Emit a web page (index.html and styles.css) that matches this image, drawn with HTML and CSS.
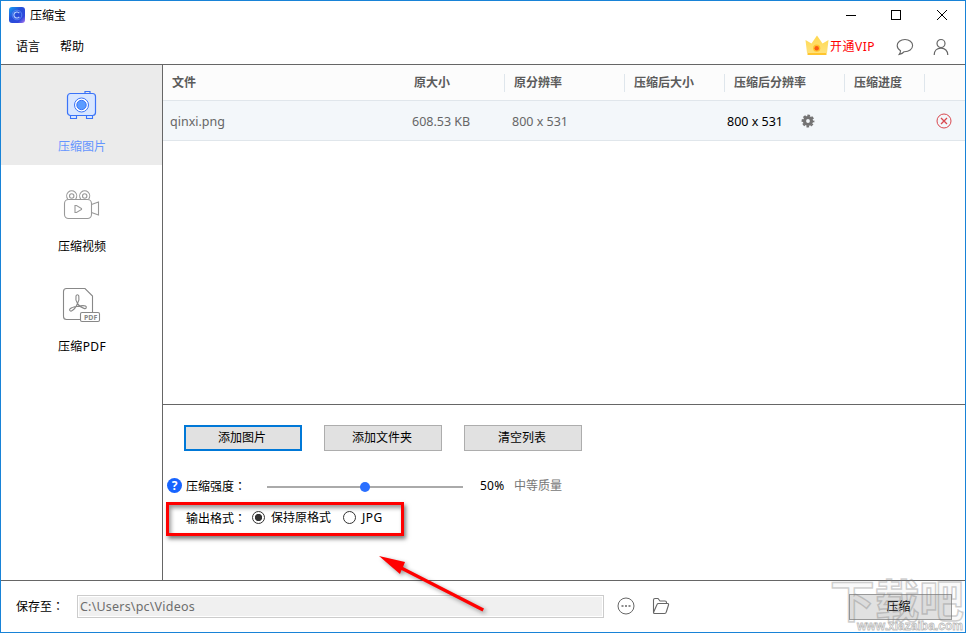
FILE: index.html
```
<!DOCTYPE html>
<html lang="zh-CN">
<head>
    <meta charset="UTF-8">
    <title>压缩宝</title>
    <link rel="stylesheet" href="styles.css">
</head>
<body>
<div class="window">

    <!-- Title bar -->
    <header class="titlebar">
        <svg class="logo" width="16" height="16" viewBox="0 0 16 16">
            <defs>
                <linearGradient id="logoFill" x1="0" y1="0" x2="1" y2="1">
                    <stop offset="0" stop-color="#16a5f5"/>
                    <stop offset="0.4" stop-color="#244fd8"/>
                    <stop offset="0.75" stop-color="#3048dc"/>
                    <stop offset="1" stop-color="#b57cf0"/>
                </linearGradient>
            </defs>
            <rect width="16" height="16" rx="3" fill="url(#logoFill)"/>
            <circle cx="8" cy="8" r="4.8" fill="none" stroke="#5d8df5" stroke-width="0.8"/>
            <path d="M10.3 6.2A3 3 0 1 0 10.3 9.8" fill="none" stroke="#b9d3ff" stroke-width="1.1"/>
        </svg>
        <span class="app-name">压缩宝</span>
        <svg class="controls" width="101" height="12" viewBox="0 0 101 12" fill="none" stroke="#000" shape-rendering="crispEdges">
            <path d="M0 6.5H10"/>
            <rect x="45.5" y="1.5" width="9" height="9"/>
            <path d="M91 1L101 11M101 1L91 11" shape-rendering="auto"/>
        </svg>
    </header>

    <!-- Menu -->
    <nav class="menubar">
        <span class="menu-item">语言</span>
        <span class="menu-item">帮助</span>
        <div class="account">
            <svg class="crown" width="24" height="21" viewBox="0 0 24 21">
                <defs>
                    <linearGradient id="crownFill" x1="0" y1="0" x2="0" y2="1">
                        <stop offset="0" stop-color="#ffd84f"/>
                        <stop offset="1" stop-color="#ffe27a"/>
                    </linearGradient>
                </defs>
                <path d="M0.5 5L6.5 8.5L12 0.5L17.5 8.5L23.5 5L22 18H2Z" fill="url(#crownFill)"/>
                <path d="M2.500 18H21.500V20H2.500Z" fill="#ffc52e"/>
                <circle cx="11.7" cy="13.2" r="3.6" fill="#ffc02e"/>
                <circle cx="11.7" cy="13.2" r="2.2" fill="#fb5a14"/>
            </svg>
            <span class="vip">开通VIP</span>
            <svg class="chat" width="18" height="18" viewBox="0 0 18 18" fill="none" stroke="#666" stroke-width="1.1">
                <path d="M9 1.5C4.6 1.5 1.2 4.1 1.2 7.6C1.2 9.8 2.5 11.6 4.5 12.7C4.5 14.2 4 15.4 3.2 16.4C5.6 16 7.2 15 8.2 13.7C13 13.8 16.6 11.2 16.6 7.6C16.6 4.1 13.3 1.5 9 1.5Z"/>
            </svg>
            <svg class="user" width="16" height="18" viewBox="0 0 16 18" fill="none" stroke="#666" stroke-width="1.2">
                <circle cx="8" cy="5.5" r="4"/>
                <path d="M1.2 17C1.2 12.8 4 10.2 8 10.2S14.8 12.8 14.8 17"/>
            </svg>
        </div>
    </nav>

    <div class="main">
        <!-- Sidebar -->
        <aside class="sidebar">
            <div class="side-item active">
                <svg width="40" height="40" viewBox="0 0 40 40" fill="none" stroke="#3a73f8">
                    <path d="M24 8.5V6.5H29V8.5" stroke-width="1.2"/>
                    <rect x="6.5" y="8.5" width="28" height="22" rx="3" fill="#d8e6ff" stroke-width="1.2"/>
                    <path d="M9.5 31V33.5H15.5V31M25.5 31V33.5H31.5V31" fill="#d8e6ff" stroke-width="1.1"/>
                    <circle cx="20.5" cy="20" r="7" fill="#fff"/>
                    <circle cx="20.5" cy="20" r="4.7" fill="#5c9cff"/>
                </svg>
                <span>压缩图片</span>
            </div>
            <div class="side-item">
                <svg width="40" height="40" viewBox="0 0 40 40" fill="none" stroke="#999" stroke-width="1.1">
                    <path d="M6.8 14A5 5 0 1 1 14.6 14M19.8 14A5 5 0 1 1 27.6 14"/>
                    <circle cx="10.7" cy="11" r="2.2"/>
                    <circle cx="23.7" cy="11" r="2.2"/>
                    <rect x="3.5" y="14.5" width="27" height="19" rx="4"/>
                    <path d="M30.5 19.5L37.5 17V30L30.5 27.5"/>
                    <path d="M14 20.5V27.5H15.5L20.5 24.5V23.5L15.5 20.5Z"/>
                </svg>
                <span>压缩视频</span>
            </div>
            <div class="side-item">
                <svg width="40" height="40" viewBox="0 0 40 40" fill="none" stroke="#888" stroke-width="1.1">
                    <path d="M19.5 34.5H5.5Q2.5 34.5 2.5 31.5V6.5Q2.5 3.5 5.5 3.5H24L31.5 11V27.5"/>
                    <path d="M16.5 18.5C15 16 14.5 13 15 11C15.5 9.3 17.3 9.3 17.8 11C18.3 13 17.8 16 16.5 18.5Z"/>
                    <path d="M16.5 18.5C15.5 21 12.5 25 10.5 26C9 26.5 8 25 9 23.8C10.5 22.4 13 21.8 16 21.5C19 20.8 22.5 20.3 24.5 21C26 22 25.3 23.8 23.5 23.6C21 23 18 20.8 16.5 18.5Z"/>
                    <rect x="19.5" y="27.5" width="19" height="9" rx="1.5"/>
                    <text x="23" y="34.7" class="pdf-tag">PDF</text>
                </svg>
                <span class="pdf-label">压缩PDF</span>
            </div>
        </aside>

        <section class="content">
            <!-- File list -->
            <div class="file-list">
                <div class="row head">
                    <div>文件</div>
                    <div>原大小</div>
                    <div>原分辨率</div>
                    <div>压缩后大小</div>
                    <div>压缩后分辨率</div>
                    <div>压缩进度</div>
                    <div></div>
                </div>
                <div class="row file">
                    <div>qinxi.png</div>
                    <div>608.53 KB</div>
                    <div>800 x 531</div>
                    <div></div>
                    <div class="target">800 x 531
                        <svg width="14" height="14" viewBox="0 0 14 14">
                            <circle cx="7" cy="7" r="3.5" fill="none" stroke="#737373" stroke-width="3.2"/>
                            <circle cx="7" cy="7" r="5.5" fill="none" stroke="#737373" stroke-width="1.8" stroke-dasharray="2.7 1.62" stroke-dashoffset="1.35"/>
                        </svg>
                    </div>
                    <div></div>
                    <div class="remove">
                        <svg width="16" height="16" viewBox="0 0 16 16" fill="none" stroke="#d9484f">
                            <circle cx="8" cy="8" r="7"/>
                            <path d="M5 5L11 11M11 5L5 11" stroke-width="1.3"/>
                        </svg>
                    </div>
                </div>
            </div>

            <!-- Options -->
            <div class="options">
                <div class="buttons">
                    <button class="btn primary">添加图片</button>
                    <button class="btn">添加文件夹</button>
                    <button class="btn">清空列表</button>
                </div>
                <div class="strength">
                    <span class="help">?</span>
                    <span class="label">压缩强度<span class="colon" lang="zh-TW">：</span></span>
                    <div class="slider"><i class="thumb"></i></div>
                    <span class="percent">50%</span>
                    <span class="quality">中等质量</span>
                </div>
                <div class="format">
                    <span class="label">输出格式<span class="colon" lang="zh-TW">：</span></span>
                    <i class="radio checked"></i>
                    <span class="keep">保持原格式</span>
                    <i class="radio"></i>
                    <span class="jpg">JPG</span>
                </div>
            </div>
        </section>
    </div>

    <!-- Save path -->
    <footer class="footer">
        <span class="save-label">保存至<span class="colon" lang="zh-TW">：</span></span>
        <div class="path"><span>C:\Users\pc\Videos</span></div>
        <svg class="more" width="18" height="18" viewBox="0 0 18 18" fill="none" stroke="#666">
            <circle cx="9" cy="9" r="8"/>
            <path d="M4.5 9H6.5M8 9H10M11.5 9H13.5" stroke-width="1.6"/>
        </svg>
        <svg class="folder" width="18" height="18" viewBox="0 0 18 18" fill="none" stroke="#666" stroke-width="1.1">
            <path d="M1.5 15.5V3Q1.5 1.5 3 1.5H6L8 4H13Q14.5 4 14.5 5.5V6.5"/>
            <path d="M1.5 15.5L5 7.5Q5.4 6.5 6.5 6.5H15.5Q17 6.5 16.5 8L14.3 15Q14 16.5 12.5 16.5H2.5Q1.5 16.5 1.5 15.5Z"/>
        </svg>
        <button class="btn start">压缩</button>
    </footer>

    <!-- Highlight arrow -->
    <svg class="arrow" width="120" height="70" viewBox="0 0 120 70">
        <path d="M8 6L34 12L32 17L113 58.5L111.5 61.5L30.5 20L29 24Z" fill="#f00"/>
    </svg>
    <div class="highlight"></div>

    <!-- Watermark -->
    <svg class="watermark" width="138" height="58" viewBox="0 0 138 58">
        <text x="1" y="44" class="mark-name" textLength="134" lengthAdjust="spacingAndGlyphs">下载吧</text>
        <text x="28" y="56" class="mark-url" textLength="106" lengthAdjust="spacingAndGlyphs">www.xiazaiba.com</text>
    </svg>
</div>
</body>
</html>
```
FILE: styles.css
```
* {
    box-sizing: border-box;
}
body {
    margin: 0;
    font: 12px/16px "Noto Sans", "Noto Sans CJK SC", sans-serif;
    color: #000;
    background-color: #fff;
}
svg {
    display: block;
    flex: none;
}
.window {
    position: relative;
    display: flex;
    flex-direction: column;
    width: 966px;
    height: 633px;
    border: 1px solid #1883d7;
    overflow: hidden;
}

/* Title and menu */
.titlebar {
    display: flex;
    align-items: center;
    height: 28px;
    padding: 0 18px 0 8px;
}
.app-name {
    margin-left: 5px;
    padding-top: 2px;
}
.controls {
    margin-left: auto;
}
.menubar {
    display: flex;
    align-items: center;
    height: 36px;
    padding: 0 16px 0 15px;
    border-bottom: 1px solid #666;
}
.menu-item {
    margin-right: 20px;
}
.account {
    display: flex;
    align-items: center;
    margin-left: auto;
}
.crown {
    margin-bottom: 2px;
}
.vip {
    width: 45px;
    margin-left: 1px;
    color: #f00;
    letter-spacing: 0.5px;
    white-space: nowrap;
}
.chat {
    margin-left: 21px;
}
.user {
    margin-left: 19px;
}

/* Main area */
.main {
    display: flex;
    height: 515px;
}
.sidebar {
    width: 162px;
    border-right: 1px solid #666;
}
.side-item {
    display: flex;
    flex-direction: column;
    align-items: center;
    height: 100px;
    padding: 20px 0 0 1px;
    gap: 14px;
}
.side-item svg {
    margin-right: 3px;
}
.side-item.active {
    background-color: #ebebeb;
    color: #6495ff;
}
.pdf-label {
    letter-spacing: 0.4px;
}
.pdf-tag {
    font: bold 7px "Noto Sans", sans-serif;
    fill: #888;
    stroke: none;
}
.content {
    flex: 1;
}
.file-list {
    height: 340px;
    border-bottom: 1px solid #666;
}
.row {
    display: grid;
    grid-template-columns: 241px 100px 120px 100px 120px 80px 1fr;
    align-items: center;
    border-bottom: 1px solid #e0e6eb;
}
.row.head {
    height: 36px;
    background-color: #fcfcfc;
    color: #5b5b5b;
    font-weight: bold;
}
.head div {
    height: 18px;
    padding: 1px 0 0 9px;
    border-left: 1px solid #dfe6ec;
}
.head div:first-child {
    padding-left: 8px;
}
.head div:nth-child(-n+2) {
    border-left-color: transparent;
}
.row.file {
    height: 40px;
    background-color: #f3f7fa;
    color: #666;
    font-size: 12.5px;
}
.file div {
    padding: 2px 0 0 8px;
}
.file div:first-child {
    padding-left: 7px;
}
.file .target {
    display: flex;
    align-items: center;
    gap: 18px;
    padding-left: 3px;
    color: #000;
}
.target svg {
    margin-bottom: 2px;
}
.file .remove {
    padding: 0 0 0 12px;
}

/* Options */
.options {
    padding: 20px 0 0 3px;
}
.buttons {
    display: flex;
    gap: 22px;
    padding-left: 18px;
}
.btn {
    width: 118px;
    height: 26px;
    padding: 0 2px 0 0;
    border: 1px solid #adadad;
    background-color: #e1e1e1;
    font: inherit;
    color: #000;
}
.btn.primary {
    border: 2px solid #0078d7;
}
.strength {
    display: flex;
    align-items: center;
    height: 16px;
    margin-top: 27px;
}
.help {
    width: 15px;
    height: 15px;
    margin: -1px 4px 0 1px;
    border-radius: 50%;
    background-color: #1764ff;
    color: #fff;
    font-weight: bold;
    line-height: 15px;
    text-align: center;
}
.label {
    width: 60px;
    white-space: nowrap;
}
.colon {
    font-family: "Noto Sans CJK TC", sans-serif;
}
.slider {
    display: flex;
    align-items: center;
    width: 196px;
    height: 10px;
    margin: 1px 17px 0 21px;
    background: linear-gradient(#aaa, #aaa) center / 100% 2px no-repeat;
}
.thumb {
    width: 10px;
    height: 10px;
    margin-left: 93px;
    border-radius: 50%;
    background-color: #2a6fff;
}
.percent {
    width: 34px;
    letter-spacing: 0.2px;
}
.quality {
    color: #777;
}
.format {
    display: flex;
    align-items: center;
    height: 16px;
    margin-top: 16px;
    padding-left: 20px;
}
.radio {
    width: 13px;
    height: 13px;
    margin: -1px 6px 0 5px;
    border: 1px solid #333;
    border-radius: 50%;
}
.format .label + .radio {
    margin-left: 6px;
}
.radio.checked {
    background: radial-gradient(circle, #333 3.3px, #fff 4px);
}
.keep {
    margin-right: 7px;
}
.jpg {
    letter-spacing: 0.5px;
}

/* Footer */
.footer {
    display: flex;
    align-items: center;
    height: 52px;
    padding: 0 13px 0 15px;
    border-top: 1px solid #666;
}
.save-label {
    width: 61px;
    white-space: nowrap;
}
.path {
    width: 527px;
    height: 23px;
    padding: 1px;
    border: 1px solid #ccc;
    color: #6d6d6d;
    font-size: 12.5px;
    line-height: 20px;
    letter-spacing: 0.2px;
}
.path span {
    display: block;
    height: 19px;
    padding-left: 1px;
    background-color: #f0f0f0;
}
.more {
    margin: -2px 0 0 13px;
}
.folder {
    margin: -2px 0 0 17px;
}
.start {
    width: 103px;
    margin-left: auto;
    padding-right: 4px;
    border-color: #999;
}

/* Overlays */
.highlight {
    position: absolute;
    left: 165px;
    top: 501px;
    width: 238px;
    height: 34px;
    border: 3px solid #f00;
    box-shadow: 2px 3px 4px rgba(0,0,0,0.5), inset 2px 3px 4px rgba(0,0,0,0.4);
}
.arrow {
    position: absolute;
    left: 370px;
    top: 549px;
    filter: drop-shadow(2px 2px 2px rgba(0,0,0,0.4));
}
.watermark {
    position: absolute;
    left: 828px;
    top: 573px;
}
.mark-name {
    font: bold 45px "Noto Sans CJK SC", sans-serif;
    fill: rgba(160,160,160,0.08);
    stroke: rgba(120,120,120,0.35);
    stroke-width: 1.5;
}
.mark-url {
    font: bold 12px "Liberation Sans", sans-serif;
    fill: rgba(255,255,255,0.8);
    stroke: rgba(120,120,120,0.5);
    stroke-width: 0.8;
}
```
